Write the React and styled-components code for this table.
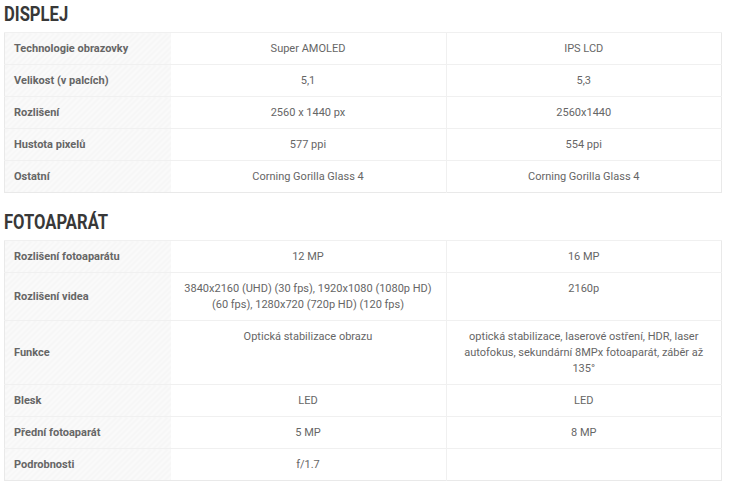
import React from 'react';
import styled, { createGlobalStyle } from 'styled-components';

const GlobalStyle = createGlobalStyle`
  html, body {
    margin: 0;
    padding: 0;
    background: #fff;
  }
  body {
    font-family: Roboto, "Liberation Sans", Arial, sans-serif;
    color: #666;
  }
`;

const Page = styled.div`
  padding: 2px 7px 0 4px;
`;

const Section = styled.section`
  & + & {
    margin-top: 17px;
  }
`;

const Heading = styled.h2`
  margin: 0 0 6px;
  font-size: 20px;
  line-height: 24px;
  font-weight: 700;
  color: #383838;
  display: inline-block;
  transform: scaleX(0.83);
  transform-origin: left center;
  white-space: nowrap;
`;

const Table = styled.table`
  width: 100%;
  border-collapse: collapse;
  table-layout: fixed;
  border: 1px solid #e9e9e9;
  font-size: 11px;
  line-height: 16px;
`;

const LabelCol = styled.col`
  width: 166px;
`;

const Label = styled.th`
  padding: 8px 8px 7px 9px;
  text-align: left;
  vertical-align: middle;
  font-weight: 700;
  color: #666;
  border-top: 1px solid #f0f0f0;
  background: repeating-linear-gradient(
    -45deg,
    #f6f6f6 0,
    #f6f6f6 2px,
    #fafafa 2px,
    #fafafa 4px
  );
`;

const Value = styled.td`
  padding: 8px 10px 7px;
  text-align: center;
  vertical-align: top;
  color: #666;
  border-top: 1px solid #f0f0f0;
  border-left: ${(p) => (p.$divided ? '1px solid #f0f0f0' : 'none')};
`;

const sections = [
  {
    title: 'DISPLEJ',
    rows: [
      ['Technologie obrazovky', 'Super AMOLED', 'IPS LCD'],
      ['Velikost (v palcích)', '5,1', '5,3'],
      ['Rozlišení', '2560 x 1440 px', '2560x1440'],
      ['Hustota pixelů', '577 ppi', '554 ppi'],
      ['Ostatní', 'Corning Gorilla Glass 4', 'Corning Gorilla Glass 4'],
    ],
  },
  {
    title: 'FOTOAPARÁT',
    rows: [
      ['Rozlišení fotoaparátu', '12 MP', '16 MP'],
      [
        'Rozlišení videa',
        '3840x2160 (UHD) (30 fps), 1920x1080 (1080p HD) (60 fps), 1280x720 (720p HD) (120 fps)',
        '2160p',
      ],
      [
        'Funkce',
        'Optická stabilizace obrazu',
        'optická stabilizace, laserové ostření, HDR, laser autofokus, sekundární 8MPx fotoaparát, záběr až 135°',
      ],
      ['Blesk', 'LED', 'LED'],
      ['Přední fotoaparát', '5 MP', '8 MP'],
      ['Podrobnosti', 'f/1.7', ''],
    ],
  },
];

export default function App() {
  return (
    <Page>
      <GlobalStyle />
      {sections.map((s) => (
        <Section key={s.title}>
          <Heading>{s.title}</Heading>
          <Table>
            <colgroup>
              <LabelCol />
              <col />
              <col />
            </colgroup>
            <tbody>
              {s.rows.map(([label, a, b]) => (
                <tr key={label}>
                  <Label>{label}</Label>
                  <Value>{a}</Value>
                  <Value $divided>{b}</Value>
                </tr>
              ))}
            </tbody>
          </Table>
        </Section>
      ))}
    </Page>
  );
}
